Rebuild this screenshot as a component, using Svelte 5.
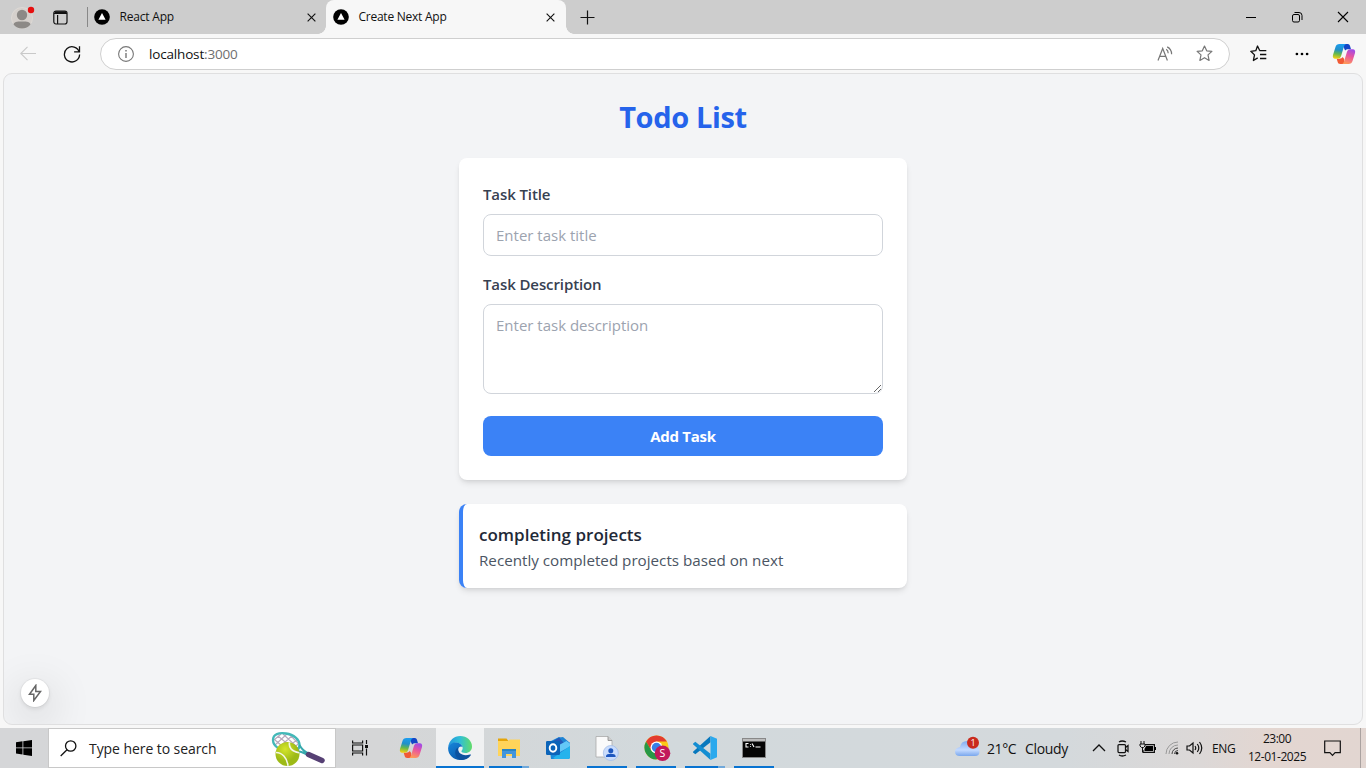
<script>
  let title = $state('');
  let description = $state('');
  let tasks = $state([
    { title: 'completing projects', description: 'Recently completed projects based on next' }
  ]);

  function addTask(event) {
    event.preventDefault();
    if (!title.trim()) return;
    tasks.push({ title, description });
    title = '';
    description = '';
  }
</script>

{#snippet nextLogo()}
  <svg class="favicon" width="16" height="16" viewBox="0 0 16 16">
    <circle cx="8" cy="8" r="7.8" fill="#000" />
    <path d="M8 4 11.6 10.8H4.4Z" fill="#fff" />
  </svg>
{/snippet}

{#snippet cross(size)}
  <svg width={size} height={size} viewBox="0 0 10 10" fill="none" stroke="#111" stroke-width="1.25">
    <path d="m.7.7 8.6 8.6M9.3.7.7 9.3" />
  </svg>
{/snippet}

{#snippet copilot(id)}
  <svg width="24" height="24" viewBox="0 0 24 24">
    <defs>
      <linearGradient id="{id}a" x1=".5" y1="0" x2=".35" y2="1">
        <stop offset="0" stop-color="#1b9df0" /><stop offset=".4" stop-color="#2290c8" />
        <stop offset=".68" stop-color="#65b84c" /><stop offset="1" stop-color="#f4cf12" />
      </linearGradient>
      <linearGradient id="{id}b" x1=".7" y1="0" x2=".35" y2="1">
        <stop offset="0" stop-color="#a04be8" /><stop offset=".45" stop-color="#e8559f" />
        <stop offset="1" stop-color="#ff9a58" />
      </linearGradient>
    </defs>
    <path d="M12 2h3.800c1.500 0 2 1 2.400 2.400l.8 2.800h-2.700c-1.400 0-2.500.2-3.200 1.300L11.500 5Z" fill="#1546c7" />
    <path d="M12 22H8.200c-1.500 0-2.200-1-2.600-2.300l-.9-3h2.600c1.700 0 2.700-.4 3.400-1.600l1.500 2Z" fill="#f15a35" />
    <path d="M7.500 2h6.600c-1.200.3-1.800 1.500-2.300 3.100L9 14.200c-.6 1.700-1.600 2.500-3.400 2.500H3.300C1 16.700.5 15 1 13L3.400 5.200C4.100 3 5.300 2 7.500 2Z" fill="url(#{id}a)" />
    <path d="M16.500 22H9.900c1.200-.3 1.800-1.500 2.300-3.100L15 9.800c.6-1.700 1.600-2.600 3.400-2.600h2.300c2.300 0 2.800 1.800 2.300 3.800l-2.400 7.800c-.7 2.200-1.900 3.200-4.100 3.200Z" fill="url(#{id}b)" />
  </svg>
{/snippet}

<div class="screen">
  <header class="tabs">
    <div class="avatar">
      <svg width="26" height="26" viewBox="0 0 26 26">
        <circle cx="12" cy="14" r="10.5" fill="#d5d0cc" stroke="#dedad6" />
        <circle cx="12" cy="11" r="5.2" fill="#8c8986" />
        <path d="M3.500 20.500c.7-2.600 2.800-3 8.500-3s7.800.4 8.500 3C18.500 23 15.500 24.500 12 24.500S5.500 23 3.500 20.500Z" fill="#8c8986" />
        <circle cx="21" cy="6" r="3.200" fill="#e60f0f" />
      </svg>
    </div>
    <svg class="workspaces" width="15" height="15" viewBox="0 0 15 15" fill="none" stroke="#111" stroke-width="1.200">
      <rect x=".8" y="1" width="13.200" height="13" rx="2.200" />
      <path d="M1 3.300h13M4.600 5v9" /><path d="M2 2.200h11" stroke-width="2" />
    </svg>
    <div class="divider"></div>
    <div class="tab inactive">
      {@render nextLogo()}
      <span class="react">React App</span>
      {@render cross(9)}
    </div>
    <div class="tab active">
      {@render nextLogo()}
      <span class="create">Create Next App</span>
      {@render cross(9)}
    </div>
    <svg class="plus" width="15" height="15" viewBox="0 0 15 15" stroke="#111" stroke-width="1.200"><path d="M.5 7.500h14M7.500.5v14" /></svg>
    <div class="window-buttons">
      <svg width="46" height="34" viewBox="0 0 46 34" stroke="#000"><path d="M18 17.500h10" /></svg>
      <svg width="46" height="34" viewBox="0 0 46 34" fill="none" stroke="#000">
        <rect x="18.500" y="14.500" width="7" height="7.500" rx="1.500" />
        <path d="M20.500 12.500h4.500a3 3 0 0 1 3 3v4.500" />
      </svg>
      <svg width="46" height="34" viewBox="0 0 46 34" stroke="#000" stroke-width="1.100"><path d="m18 12 10 10m0-10L18 22" /></svg>
    </div>
  </header>

  <nav class="toolbar">
    <svg class="back" width="16" height="16" viewBox="0 0 16 16" fill="none" stroke="#c9c9c9" stroke-width="1.100"><path d="M16 7.500H.8M7.500.8.8 7.500l6.700 6.700" /></svg>
    <svg class="reload" width="18" height="18" viewBox="0 0 18 18" fill="none" stroke="#111" stroke-width="1.300">
      <path d="M16.300 7.200A7.600 7.600 0 1 0 16.600 9.500M16.500 1.200v5.600h-5.400" />
    </svg>
    <div class="address">
      <svg width="16" height="16" viewBox="0 0 16 16" fill="none" stroke="#777" stroke-width="1.100">
        <circle cx="8" cy="8" r="7.400" /><path d="M8 7v5" stroke-width="1.400" /><path d="M8 4v1.500" stroke-width="1.500" />
      </svg>
      <div class="url"><span>localhost</span>:3000</div>
      <svg class="read" width="17" height="16" viewBox="0 0 17 16" fill="none" stroke="#777" stroke-width="1.200">
        <path d="M1 14.500 5.700 2.500 10.400 14.500M2.700 10.300h6" />
        <path d="M9.200 3.300c1.500.9 2 2.200 2 4M10.200.9c2.700 1.300 4.400 4 4.400 7.400" />
      </svg>
      <svg class="star" width="17" height="17" viewBox="0 0 17 17" fill="none" stroke="#777" stroke-width="1.200" stroke-linejoin="round">
        <path d="m8.500 1 2.200 4.800 5.200.6-3.900 3.500 1.100 5.500-4.600-2.700-4.600 2.700L5 9.900 1.100 6.400l5.200-.6Z" />
      </svg>
    </div>
    <svg class="favourites" width="17" height="17" viewBox="0 0 17 17" fill="none" stroke="#111" stroke-width="1.300" stroke-linejoin="round">
      <path d="M9.700 5.500 7.500 1 5.800 5.700.8 6.300l3.700 3.600-1.100 5.600 4.300-2.600M9.500 5.600h6.800M10 9.500h6.300M10 13.500h6.300" />
    </svg>
    <svg class="more" width="14" height="4" viewBox="0 0 14 4"><circle cx="1.900" cy="2" r="1.350" /><circle cx="7" cy="2" r="1.350" /><circle cx="12.100" cy="2" r="1.350" /></svg>
    {@render copilot('bar')}
  </nav>

  <main>
    <h1>Todo List</h1>
    <form onsubmit={addTask}>
      <label for="title">Task Title</label>
      <input id="title" placeholder="Enter task title" bind:value={title} />
      <label for="description">Task Description</label>
      <textarea id="description" placeholder="Enter task description" bind:value={description}></textarea>
      <button type="submit">Add Task</button>
    </form>
    {#each tasks as task}
      <article>
        <h2>{task.title}</h2>
        <p>{task.description}</p>
      </article>
    {/each}
    <div class="dev-badge">
      <svg width="16" height="18" viewBox="0 0 16 18" fill="none" stroke="#666" stroke-width="1.500" stroke-linejoin="miter">
        <path d="M8.800 1.500 2.500 10.200h4.300v6.300l6.700-9H8.800Z" />
      </svg>
    </div>
  </main>

  <footer>
    <div class="start">
      <svg width="16" height="16" viewBox="0 0 16 16"><path d="M0 2.200 6.500 1.300v6.200H0ZM7.300 1.200 16 0v7.500H7.300ZM0 8.300h6.500v6.200L0 13.600ZM7.300 8.300H16V16l-8.700-1.300Z" /></svg>
    </div>
    <div class="search">
      <svg width="17" height="17" viewBox="0 0 17 17" fill="none" stroke="#111" stroke-width="1.300"><circle cx="10.700" cy="6" r="5.200" /><path d="M7 9.800.7 16" /></svg>
      <span>Type here to search</span>
      <svg class="tennis" width="56" height="38" viewBox="0 0 56 38">
        <defs>
          <radialGradient id="ball" cx=".4" cy=".3"><stop offset="0" stop-color="#d5e52c" /><stop offset="1" stop-color="#9dba16" /></radialGradient>
        </defs>
        <g stroke="#b8a9bd" stroke-width="1.100" fill="none"><path d="m4 10 14 12M7 6l18 15M12 4l15 14M18 4l9 9M4 15 16 4M6 19 22 5M12 21 27 9M19 22l9-9M3 10l7-6" /></g>
        <path d="M2 10C2 4 8 2.500 15 3.500c8 1 13.500 6 13.500 11.500 0 5-4 7.500-9.500 6.500C11 21.500 2 17 2 10Z" fill="none" stroke="#43b8b8" stroke-width="2.300" />
        <path d="M28.500 15c2 4 4.500 6.500 9 8.500M24 21c5 0 8 1 12.500 4" fill="none" stroke="#36a9ad" stroke-width="2" />
        <path d="m37.500 24.500 13.500 6" stroke="#564074" stroke-width="5.500" stroke-linecap="round" />
        <circle cx="16.500" cy="24" r="12" fill="url(#ball)" />
        <path d="M5 22.500c6 0 11 5 12 13.300M18.500 12.300c-1 5 2 9 9.700 10.500" fill="none" stroke="#f4f6e8" stroke-width="1.600" />
      </svg>
    </div>
    <div class="app task-view">
      <svg width="18" height="18" viewBox="0 0 18 18" fill="none" stroke="#111" stroke-width="1.200">
        <path d="M1.600 1.500V4h10V1.500M1.600 16.500V14h10v2.500M1.600 6h10v6h-10ZM15.500 1v4M15.500 9.500v7" /><path d="M14 6h3v3h-3Z" fill="#111" stroke="none" />
      </svg>
    </div>
    <div class="app copilot-app">{@render copilot('task')}</div>
    <div class="app focused run full">
      <svg width="24" height="24" viewBox="0 0 24 24">
        <defs>
          <linearGradient id="edge-top" x1="0" y1=".5" x2="1" y2=".5"><stop offset="0" stop-color="#2394dd" /><stop offset=".5" stop-color="#30bfd5" /><stop offset="1" stop-color="#62dc69" /></linearGradient>
          <linearGradient id="edge-low" x1="0" y1="0" x2=".8" y2="1"><stop offset="0" stop-color="#1687dc" /><stop offset="1" stop-color="#0a4fa0" /></linearGradient>
        </defs>
        <path d="M.2 11C1 4.500 6 0 12.200 0 19 0 24 4.800 24 10.400c0 4-3 6.500-6.600 6.500-2.500 0-4-.8-4-1.700 0-.8 1.300-1.200 1.300-3.300 0-2.800-2.800-5.200-6.700-5.200C4.500 6.700 1.500 8.500.2 11Z" fill="url(#edge-top)" />
        <path d="M.1 12.500C.2 8.700 3.500 6.400 7.300 6.400c4 0 6.900 2.100 7.300 4.800-1.200-1.300-4.400-.7-4.400 2.800 0 4.600 5.800 7.500 11.700 5.300C19.500 22.500 16 24 12 24 5.500 24 .1 18.700.1 12.500Z" fill="url(#edge-low)" />
        <path d="M10 11.500c-.7 5 4 9.400 12 7.100.8-.3 1.200.1.800.6C20.500 22.500 17 24 13.500 24 7 23 5 14.500 10 11.500Z" fill="#0d529f" />
      </svg>
    </div>
    <div class="app run stacked">
      <svg width="24" height="22" viewBox="0 0 24 22">
        <path d="M1 1.500h8.500l2 2.500H1Z" fill="#e5a50b" /><path d="M1 4h10l1.500-1.500H23V19H1Z" fill="#ffd45a" />
        <path d="M5 21v-9h14v9h-4v-4H9v4Z" fill="#4295dc" /><path d="M5 12h14v2H5Z" fill="#2784c6" />
      </svg>
    </div>
    <div class="app">
      <svg width="26" height="24" viewBox="0 0 26 24">
        <path d="M4 6 14 1l11 6v14q0 2-2 2H6Z" fill="#168bdc" /><path d="m8 5 6-3.500L22 6v8H8Z" fill="#2459b8" />
        <path d="m14 1.500 4-.5 7 6v4l-9 6-3-5 6-5Z" fill="#1f84d4" /><path d="M15 8.500 21.500 5 25 7.500v3L15 16Z" fill="#63c8f7" />
        <path d="m25 10-17 12 2 1h13q2 0 2-2Z" fill="#25b3ec" />
        <rect x="1" y="5" width="14" height="14" rx="1.200" fill="#0b64b9" />
        <ellipse cx="8" cy="12" rx="3.300" ry="3.700" fill="none" stroke="#fff" stroke-width="1.900" />
      </svg>
    </div>
    <div class="app run">
      <svg width="24" height="26" viewBox="0 0 24 26">
        <path d="M1 1.500h12l4 4V22H1Z" fill="#fafafa" stroke="#aaa" stroke-width=".8" /><path d="M13 1.500v4h4" fill="#ccc" stroke="#888" stroke-width=".8" />
        <circle cx="15.800" cy="18" r="7.500" fill="#c9dcfc" stroke="#9db9e5" stroke-width=".7" />
        <circle cx="15.800" cy="15.700" r="2.500" fill="#1d57bf" /><path d="M11 22v-1c0-3 9.600-3 9.600 0v1Z" fill="#1d57bf" />
      </svg>
    </div>
    <div class="app run chrome">
      <svg width="27" height="26" viewBox="0 0 27 26">
        <circle cx="12.500" cy="12.500" r="12" fill="#fbc918" />
        <path d="M2.100 6.500A12 12 0 0 1 22.900 6.500H12.500L7.200 15.500Z" fill="#e33b2e" />
        <path d="M2.100 6.500A12 12 0 0 0 12.500 24.500l5.200-9H7.300Z" fill="#279847" />
        <circle cx="12.500" cy="12.500" r="6" fill="#fff" /><circle cx="12.500" cy="12.500" r="4.700" fill="#377fe8" />
        <circle cx="18.500" cy="18.200" r="7.800" fill="#c2185b" />
        <text x="18.500" y="22" text-anchor="middle" font-size="10.500" fill="#fff">S</text>
      </svg>
    </div>
    <div class="app run stacked">
      <svg width="24" height="24" viewBox="0 0 24 24">
        <path d="M17.500 0v6.300L2.300 18.200.2 16.500q-.4-.6.1-1.100Z" fill="#0878bd" />
        <path d="M17.500 24v-6.300L2.300 5.800.2 7.500q-.4.600.1 1.100Z" fill="#148ed2" />
        <path d="M17.500 0 24 2.800v18.400L17.500 24Z" fill="#2ba9ed" />
      </svg>
    </div>
    <div class="app run">
      <svg width="24" height="20" viewBox="0 0 24 20">
        <rect x=".5" y=".5" width="23" height="19" fill="#050505" stroke="#888" /><path d="M1 1h22v2.500H1Z" fill="#bcbcbc" />
        <path d="M6.500 5.500H4v3.500h2.500M8.500 6v.8M8.500 8v.8M10 5.500l2 3.500M13.500 9h5" fill="none" stroke="#fff" stroke-width="1.100" />
      </svg>
    </div>

    <div class="tray">
      <svg class="cloud" width="25" height="22" viewBox="0 0 25 22">
        <defs><linearGradient id="cloud" x1="0" y1="0" x2="0" y2="1"><stop offset="0" stop-color="#83acef" /><stop offset=".6" stop-color="#c3daff" /><stop offset="1" stop-color="#79a7ed" /></linearGradient></defs>
        <path d="M5 20q-5 0-5-4.500Q0 12 5 11q1-6 7-6 5 0 7 5.500 5.500 0 5.500 5 0 4.500-4.500 4.500Z" fill="url(#cloud)" />
        <circle cx="18" cy="6.800" r="6" fill="#c92a1d" /><text x="18" y="10.300" text-anchor="middle" font-size="9" fill="#fff">1</text>
      </svg>
      <span class="temp">21°C</span><span class="sky">Cloudy</span>
      <svg class="chevron" width="14" height="8" viewBox="0 0 14 8" fill="none" stroke="#111" stroke-width="1.300"><path d="m1 7 6-6 6 6" /></svg>
      <svg class="meet" width="14" height="17" viewBox="0 0 14 17" fill="none" stroke="#111" stroke-width="1.250"><rect x="2" y="4.500" width="7.500" height="8" rx="1" /><path d="m9.500 7.500 2.500-2v6l-2.500-2M3 2q3-2 7 0M3 15q3 2 7 0" /></svg>
      <svg class="battery" width="17" height="14" viewBox="0 0 17 14"><path d="M6 3.600h9.400v7.800H4V9" fill="none" stroke="#111" stroke-width="1.200" /><path d="M7 5h7v5H5.500V8ZM15.500 6H17v3h-1.500Z" /><path d="M2 0v3M5 0v3M1 3h5v2L4.500 6.500h-2L1 5ZM3.500 6v5" fill="none" stroke="#111" /></svg>
      <svg class="wifi" width="14" height="14" viewBox="0 0 14 14" fill="none" stroke="#999"><path d="M1 13A12 12 0 0 1 13 1M4 13a9 9 0 0 1 9-9" /><path d="M7 13a6 6 0 0 1 6-6M9.500 13a3.500 3.500 0 0 1 3.500-3.500" stroke="#444" /><circle cx="12" cy="12.300" r="1.300" fill="#111" stroke="none" /></svg>
      <svg class="sound" width="17" height="14" viewBox="0 0 17 14" fill="none" stroke="#111" stroke-width="1.200"><path d="M1 5h2.500L7 2v10L3.500 9H1ZM9 5q1.500 2 0 4M11.300 3q3 4 0 8M13.500 1q4.500 6 0 12" /></svg>
      <span class="lang">ENG</span>
      <div class="clock"><span>23:00</span><span class="date">12-01-2025</span></div>
      <svg class="notes" width="17" height="17" viewBox="0 0 17 17" fill="none" stroke="#111" stroke-width="1.200"><path d="M.7 1h15.600v11.700h-5.200l-2.600 2.600-2.600-2.600H.7Z" /></svg>
      <div class="peek"></div>
    </div>
  </footer>
</div>

<style>
  :global(body) { margin: 0; overflow: hidden; }
  * { box-sizing: border-box; }
  svg { display: block; flex: none; }
  .screen { width: 1366px; height: 768px; display: flex; flex-direction: column; background: #f7f7f7; font-family: "Open Sans", "Noto Sans", sans-serif; color: #111; overflow: hidden; }
  span, label, h1, h2, p, .url { white-space: nowrap; }

  .tabs { height: 34px; display: flex; align-items: center; background: #cdcdcd; flex: none; font-size: 12px; }
  .avatar { width: 42px; padding: 0 0 0 10px; }
  .avatar svg { margin-top: -1px; }
  .workspaces { margin: 0 19px 0 10.5px; }
  .divider { width: 1px; height: 20px; background: #888; }
  .tab { display: flex; align-items: center; height: 34px; }
  .tab span { margin-left: 10px; flex: 1; line-height: 34px; }
  .tab.inactive { width: 239px; padding: 0 11px 0 6px; }
  .tab.active { width: 240px; margin-left: -1px; padding: 0 11px 0 7px; background: #f7f7f7; border-radius: 8px 8px 0 0; position: relative; }
  .tab.active::before, .tab.active::after { content: ""; position: absolute; bottom: 0; width: 8px; height: 8px; }
  .tab.active::before { right: 100%; background: radial-gradient(circle at 0 0, transparent 7.5px, #f7f7f7 8px); }
  .tab.active::after { left: 100%; background: radial-gradient(circle at 100% 0, transparent 7.5px, #f7f7f7 8px); }
  .react { letter-spacing: -.2px; }
  .create { letter-spacing: -.25px; }
  .plus { margin-left: 14px; }
  .window-buttons { display: flex; margin-left: auto; }

  .toolbar { height: 39px; display: flex; align-items: center; padding: 0 10px 0 20px; flex: none; }
  .reload { margin: 0 19px 0 27px; }
  .address { width: 1130px; height: 32px; display: flex; align-items: center; border: 1px solid #cfcfcf; border-radius: 16px; background: #fff; padding: 0 16px 0 17px; }
  .url { margin-left: 15px; flex: 1; font-size: 13.5px; line-height: 30px; letter-spacing: -.17px; color: #6f6f6f; }
  .url span { color: #111; }
  .star { margin-left: 22px; }
  .favourites { margin: 0 28px 0 20px; }
  .more { margin-right: 23px; }

  main { position: relative; width: 1360px; height: 652px; margin: 0 auto 0 3px; flex: none; display: flex; flex-direction: column; align-items: center; background: #f3f4f6; border: 1px solid #dfdfe0; border-radius: 9px; overflow: hidden; padding-top: 25px; }
  h1 { margin: 0 0 23px; line-height: 36px; font-size: 29px; font-weight: 700; color: #2563eb; letter-spacing: -.35px; }
  form { width: 448px; height: 322px; padding: 24px; display: flex; flex-direction: column; background: #fff; border-radius: 8px; box-shadow: 0 4px 6px -1px #0000001a, 0 2px 4px -2px #0000001a; flex: none; }
  label { font-size: 15px; line-height: 24px; font-weight: 600; color: #374151; margin-bottom: 8px; letter-spacing: -.1px; }
  input, textarea { display: block; width: 400px; border: 1px solid #d1d5db; border-radius: 8px; padding: 8px 12px; outline: none; font: 15px/24px "Open Sans", "Noto Sans", sans-serif; color: #111827; background: #fff; letter-spacing: 0; }
  input { height: 42px; margin-bottom: 16px; }
  textarea { height: 90px; margin-bottom: 22px; resize: vertical; }
  ::placeholder { color: #9ca3af; opacity: 1; }
  button { width: 400px; height: 40px; border: 0; border-radius: 8px; background: #3b82f6; color: #fff; font: 700 15px/24px "Open Sans", "Noto Sans", sans-serif; letter-spacing: -.25px; }
  article { width: 448px; height: 84px; margin-top: 24px; padding: 16px; border-left: 4px solid #3b82f6; border-radius: 8px; background: #fff; box-shadow: 0 4px 6px -1px #0000001a, 0 2px 4px -2px #0000001a; flex: none; }
  h2 { margin: 0; line-height: 29px; height: 28px; font-size: 17px; font-weight: 600; color: #1f2937; letter-spacing: .02px; }
  p { margin: 0; line-height: 24px; font-size: 15.200px; color: #4b5563; letter-spacing: 0; }
  .dev-badge { position: absolute; left: 17px; bottom: 17px; width: 28px; height: 28px; display: grid; place-items: center; border-radius: 50%; background: #fff; box-shadow: 0 0 0 1px #0000000a, 0 2px 4px #00000018, 0 12px 40px 8px #0000001a; }

  footer { height: 40px; margin-top: auto; display: flex; flex: none; background: linear-gradient(90deg, #d5d6d8 0, #d5d6d7 28%, #d2d9dc 48%, #d4d9dc 78%, #dcd8d7 88%, #e3d6d1 93%, #e2d6d1 100%); }
  .start { width: 48px; display: grid; place-items: center; }
  .search { width: 288px; height: 40px; display: flex; align-items: center; border: 1px solid #c8c8c8; background: #fff; padding-left: 11px; }
  .search span { font-size: 14px; margin-left: 12px; flex: 1; letter-spacing: -.07px; color: #222; }
  .tennis { margin: 2px 8px 0 0; }
  .app { position: relative; width: 49px; display: grid; place-items: center; flex: none; }
  .task-view { padding-right: 2px; }
  .copilot-app { width: 51px; padding-left: 1px; }
  .focused { width: 48px; background: #f0f1f2; }
  .run::after { content: ""; position: absolute; left: 5px; bottom: 0; width: 40px; height: 2px; background: #0873d1; }
  .full::after { left: 0; width: 48px; }
  .stacked::after { background: linear-gradient(90deg, #0873d1 33px, #70a8da 33px); }
  .chrome svg { margin-left: 3px; }
  .tray { margin-left: auto; width: 412px; display: flex; align-items: center; font-size: 14px; flex: none; }
  .cloud { margin: -2px 0 0 1px; }
  .temp { width: 38px; margin-left: 7px; letter-spacing: -.4px; }
  .sky { width: 44px; letter-spacing: -.35px; }
  .chevron { margin-left: 23px; }
  .meet { margin-left: 10px; }
  .battery { margin-left: 9px; }
  .wifi { margin-left: 9px; }
  .sound { margin-left: 7px; }
  .lang { width: 24px; margin-left: 9px; font-size: 12px; letter-spacing: -.4px; }
  .clock { width: 58px; margin-left: 12px; display: flex; flex-direction: column; align-items: center; font-size: 12px; line-height: 18px; letter-spacing: -.5px; margin-top: -1px; }
  .date { letter-spacing: -.45px; }
  .notes { margin-left: 18px; }
  .peek { width: 1px; height: 40px; margin-left: 19px; background: #aaa2a0; }
</style>
